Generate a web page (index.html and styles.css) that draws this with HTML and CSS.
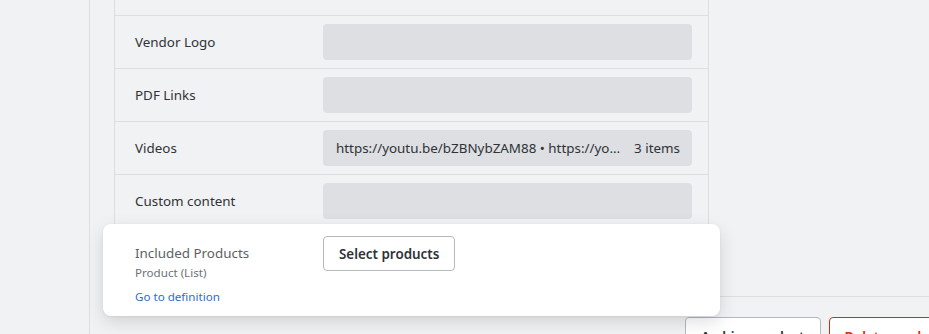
FILE: index.html
```html
<!DOCTYPE html>
<html lang="en">
<head>
    <meta charset="UTF-8">
    <meta name="viewport" content="width=device-width, initial-scale=1.0">
    <title>Product fields</title>
    <link rel="stylesheet" href="styles.css">
</head>
<body>

<div class="page">
    <!-- left nav column -->
    <div class="sidebar"></div>

    <div class="main">
        <div class="fields">
            <div class="row row-cut"></div>

            <div class="row">
                <span class="field-label">Vendor Logo</span>
                <div class="field-value"></div>
            </div>
            <div class="row">
                <span class="field-label">PDF Links</span>
                <div class="field-value"></div>
            </div>
            <div class="row">
                <span class="field-label">Videos</span>
                <div class="field-value">
                    <span class="value-text">https://youtu.be/bZBNybZAM88 &bull; https://youtu.be/Qx81aZcF3Ws &bull; https://youtu.be/3kPq0aLm1Rz</span>
                    <span class="value-count">3 items</span>
                </div>
            </div>
            <div class="row">
                <span class="field-label">Custom content</span>
                <div class="field-value"></div>
            </div>

            <!-- drop spot for the row being dragged -->
            <div class="row row-drop">
                <div class="drag-card">
                    <div class="drag-info">
                        <span class="drag-title">Included Products</span>
                        <span class="drag-type">Product (List)</span>
                        <a href="#" class="drag-link">Go to definition</a>
                    </div>
                    <button class="btn">Select products</button>
                </div>
            </div>
        </div>

        <div class="footer">
            <div class="footer-actions">
                <button class="btn btn-footer">Archive product</button>
                <button class="btn btn-footer btn-danger">Delete product</button>
            </div>
        </div>
    </div>
</div>

</body>
</html>
```

FILE: styles.css
```css
body {
    margin: 0;
    background: #f1f2f4;
    font-family: "Noto Sans", "Open Sans", sans-serif;
    font-size: 13.4px;
    color: #303237;
    overflow: hidden;
}

.page {
    display: flex;
    height: 334px;
}

.sidebar {
    width: 89px;
    flex-shrink: 0;
    border-right: 1px solid #dcdee2;
}

.main {
    flex: 1;
    padding-left: 24px;
}

/* Field list */
.fields {
    width: 593px;
    border-left: 1px solid #dcdee2;
    border-right: 1px solid #dcdee2;
}

.row {
    display: grid;
    grid-template-columns: 188px 1fr;
    align-items: center;
    height: 52px;
    padding: 0 16px 0 20px;
    border-bottom: 1px solid #dcdee2;
}

.row-cut {
    height: 15px;
}

.row-drop {
    height: 68px;
    border-bottom: none;
    position: relative;
}

.field-label {
    line-height: 20px;
}

.field-value {
    display: flex;
    align-items: center;
    gap: 12px;
    height: 36px;
    padding: 0 12px 0 13px;
    background: #dddfe3;
    border-radius: 4px;
    min-width: 0;
}

.value-text {
    flex: 1;
    min-width: 0;
    white-space: nowrap;
    overflow: hidden;
    text-overflow: ellipsis;
}

.value-count {
    white-space: nowrap;
}

/* Row lifted while dragging */
.drag-card {
    position: absolute;
    top: -4px;
    left: -12px;
    width: 617px;
    height: 92px;
    box-sizing: border-box;
    display: flex;
    align-items: flex-start;
    padding: 12px 32px;
    background: #fff;
    border-radius: 8px;
    box-shadow: 0 6px 18px rgba(0, 0, 0, 0.13), 0 1px 3px rgba(0, 0, 0, 0.06);
}

.drag-info {
    width: 188px;
    display: flex;
    flex-direction: column;
    padding-top: 7px;
}

.drag-title {
    color: #5c5f64;
    line-height: 20px;
}

.drag-type {
    margin-top: 1px;
    font-size: 11.6px;
    line-height: 18px;
    color: #6d7177;
}

.drag-link {
    margin-top: 6px;
    font-size: 11.6px;
    line-height: 18px;
    color: #2c6ecb;
    text-decoration: none;
}

.btn {
    height: 35px;
    padding: 0 15px;
    font-family: inherit;
    font-size: 13.4px;
    font-weight: 600;
    color: #303237;
    background: #fff;
    border: 1px solid #b4b9c1;
    border-radius: 4px;
    cursor: pointer;
}

/* Footer with page actions */
.footer {
    border-top: 1px solid #dcdee2;
    padding-top: 20px;
}

.footer-actions {
    display: flex;
    gap: 8px;
    margin-left: 571px;
}

.btn-footer {
    height: 40px;
    white-space: nowrap;
}

.btn-danger {
    color: #d72c0d;
    border-color: #d72c0d;
}
```
